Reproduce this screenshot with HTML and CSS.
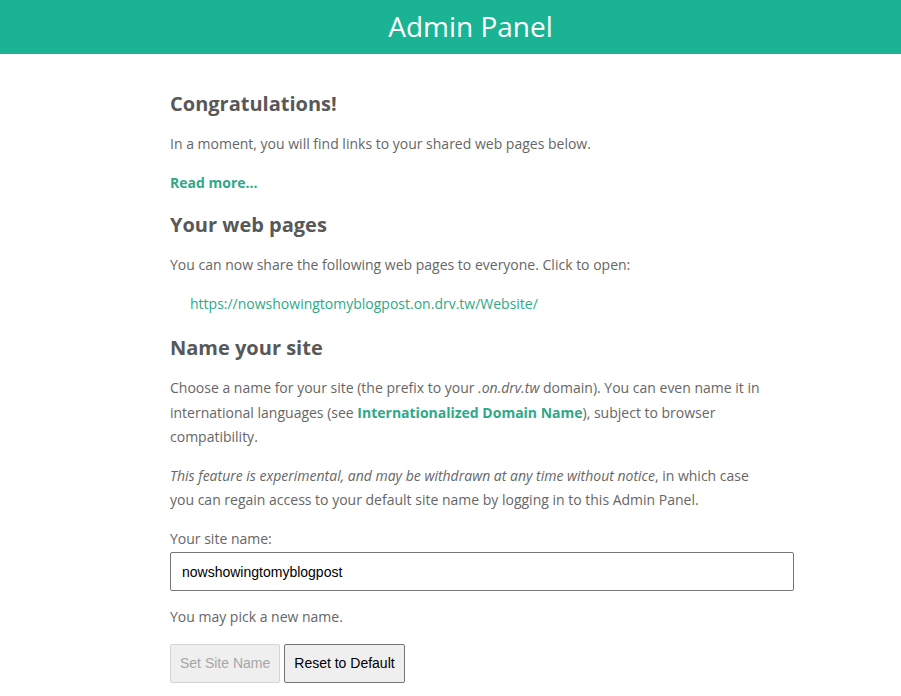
FILE: index.html
```html
<!DOCTYPE html>
<html lang="en">
<head>
    <meta charset="UTF-8" />
    <meta name="viewport" content="width=device-width, initial-scale=1.0" />
    <title>Admin Panel</title>
    <link rel="stylesheet" href="styles.css">
</head>
<body>

<div class="header">Admin Panel</div>

<div class="container">
    <h2>Congratulations!</h2>
    <p>In a moment, you will find links to your shared web pages below.</p>
    <p><a href="#" class="strong-link">Read more...</a></p>

    <h2>Your web pages</h2>
    <p>You can now share the following web pages to everyone. Click to open:</p>
    <ul class="pages">
        <li><a href="#">https://nowshowingtomyblogpost.on.drv.tw/Website/</a></li>
    </ul>

    <h2>Name your site</h2>
    <p class="narrow">Choose a name for your site (the prefix to your <em>.on.drv.tw</em> domain). You can even name it in international languages (see <a href="#" class="strong-link">Internationalized Domain Name</a>), subject to browser compatibility.</p>
    <p class="narrow"><em>This feature is experimental, and may be withdrawn at any time without notice</em>, in which case you can regain access to your default site name by logging in to this Admin Panel.</p>

    <form action="#" onsubmit="event.preventDefault();">
        <label for="sitename">Your site name:</label>
        <input type="text" id="sitename" name="sitename" value="nowshowingtomyblogpost" />
        <p>You may pick a new name.</p>
        <div class="buttons">
            <button type="submit" disabled>Set Site Name</button>
            <button type="button">Reset to Default</button>
        </div>
    </form>
</div>

</body>
</html>
```

FILE: styles.css
```css
body {
    font-family: "Open Sans", Arial, sans-serif;
    font-size: 14px;
    color: #666;
    background: #fff;
    margin: 0;
}
.header {
    background-color: #1ab394;
    color: #fff;
    height: 54px;
    line-height: 52px;
    padding-left: 40px;
    text-align: center;
    font-size: 28px;
}
.container {
    width: 624px;
    margin-left: 170px;
    padding-top: 38px;
}
h2 {
    font-size: 20px;
    line-height: 24px;
    color: #585858;
    margin: 18px 0 16px;
}
.container > h2:first-child {
    margin-top: 0;
}
p {
    line-height: 24.5px;
    margin: 0 0 14px;
}
.narrow {
    max-width: 600px;
}
a {
    color: #2ea988;
    text-decoration: none;
}
.strong-link {
    font-weight: bold;
    color: #2ea988;
}
.pages {
    list-style: none;
    margin: 0 0 20px;
    padding-left: 20px;
    line-height: 24.5px;
}

/* Site name form */
label {
    display: block;
    line-height: 24.5px;
    margin-bottom: 1px;
}
input {
    display: block;
    width: 100%;
    height: 39px;
    box-sizing: border-box;
    padding: 0 11px;
    margin-bottom: 14px;
    border: 1px solid #767676;
    border-radius: 2px;
    font-family: "Liberation Sans", Arial, sans-serif;
    font-size: 14px;
    color: #000;
}
.buttons {
    display: flex;
    gap: 4px;
    margin-top: 13px;
}
button {
    height: 39px;
    padding: 0 9px;
    font-family: "Liberation Sans", Arial, sans-serif;
    font-size: 14px;
    color: #000;
    background-color: #efefef;
    border: 1px solid #767676;
    border-radius: 2px;
}
button:disabled {
    color: #a6a6a6;
    border-color: #d4d4d4;
    background-color: #efefef;
}
```
